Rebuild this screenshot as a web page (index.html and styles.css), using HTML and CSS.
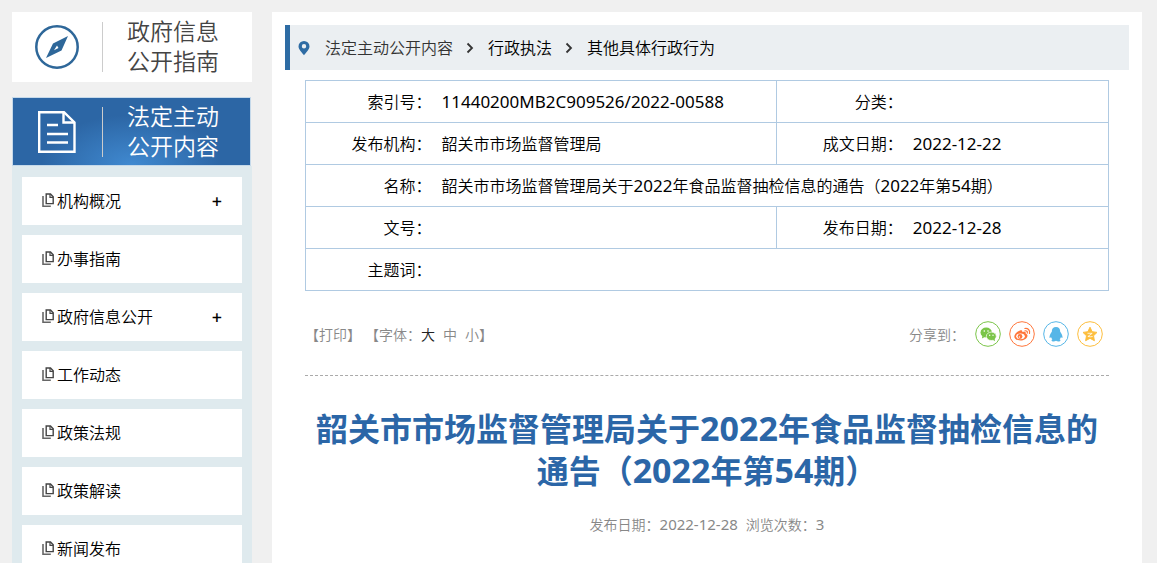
FILE: index.html
```html
<!DOCTYPE html>
<html lang="zh-CN">
<head>
    <meta charset="UTF-8">
    <meta name="viewport" content="width=device-width, initial-scale=1.0">
    <title>韶关市市场监督管理局</title>
    <link rel="stylesheet" href="styles.css">
</head>
<body>

<svg class="sprite" width="0" height="0" aria-hidden="true">
    <symbol id="copy" viewBox="0 0 12 14">
        <path d="M4.200 1h4.300L11.200 3.800V10.600H4.200z" fill="none" stroke="#444" stroke-width="1.4"/>
        <path d="M8 1v3.300h3.200" fill="none" stroke="#444" stroke-width="1.2"/>
        <path d="M1 3v10.300h7.800" fill="none" stroke="#666" stroke-width="1.6"/>
    </symbol>
    <symbol id="arrow" viewBox="0 0 8 12">
        <path d="M1.500 1.500L6 6l-4.500 4.500" fill="none" stroke="#333" stroke-width="1.8"/>
    </symbol>
</svg>

<div class="container">
    <aside class="sidebar">
        <a class="guide" href="#">
            <span class="guide-icon">
                <svg width="44" height="44" viewBox="0 0 44 44">
                    <circle cx="22" cy="22" r="20.700" fill="none" stroke="#2e6799" stroke-width="2.500"/>
                    <path fill="#2e6799" fill-rule="evenodd" d="M33 11L26.500 25.500 11 33 18 18.500zM22 20.500l-3 4.800 4.500-2.200z"/>
                </svg>
            </span>
            <span class="guide-text">政府信息<br>公开指南</span>
        </a>
        <a class="guide active" href="#">
            <span class="guide-icon">
                <svg width="40" height="44" viewBox="0 0 40 44">
                    <path d="M1.200 2.200H26L36.500 12.500V41.800H1.200z" fill="none" stroke="#fff" stroke-width="2.400"/>
                    <path d="M25.500 2.200V12.500h11M9 15h11M9 24h21M9 32.500h21" fill="none" stroke="#fff" stroke-width="2.400"/>
                </svg>
            </span>
            <span class="guide-text">法定主动<br>公开内容</span>
        </a>
        <ul class="menu">
            <li><a href="#"><svg class="copy"><use href="#copy"/></svg>机构概况</a><button type="button" aria-label="展开机构概况">+</button></li>
            <li><a href="#"><svg class="copy"><use href="#copy"/></svg>办事指南</a></li>
            <li><a href="#"><svg class="copy"><use href="#copy"/></svg>政府信息公开</a><button type="button" aria-label="展开政府信息公开">+</button></li>
            <li><a href="#"><svg class="copy"><use href="#copy"/></svg>工作动态</a></li>
            <li><a href="#"><svg class="copy"><use href="#copy"/></svg>政策法规</a></li>
            <li><a href="#"><svg class="copy"><use href="#copy"/></svg>政策解读</a></li>
            <li><a href="#"><svg class="copy"><use href="#copy"/></svg>新闻发布</a></li>
        </ul>
    </aside>

    <main class="main">
        <nav class="crumbs">
            <svg class="pin" viewBox="0 0 12 16">
                <path fill="#2e6ca4" fill-rule="evenodd" d="M6 1a5.500 5.500 0 0 0-5.500 5.500C.5 9.500 4 12.500 6 15.300 8 12.500 11.500 9.500 11.500 6.500A5.500 5.500 0 0 0 6 1zM6 4a2.200 2.200 0 1 1 0 4.400A2.200 2.200 0 0 1 6 4z"/>
            </svg>
            <a class="first" href="#">法定主动公开内容</a>
            <svg class="arrow"><use href="#arrow"/></svg>
            <a href="#">行政执法</a>
            <svg class="arrow"><use href="#arrow"/></svg>
            <a href="#">其他具体行政行为</a>
        </nav>

        <article class="content">
            <table class="info">
                <colgroup>
                    <col class="label">
                    <col>
                    <col class="label">
                    <col class="narrow">
                </colgroup>
                <tr>
                    <th>索引号：</th>
                    <td><span class="num">11440200MB2C909526/2022-00588</span></td>
                    <th>分类：</th>
                    <td></td>
                </tr>
                <tr>
                    <th>发布机构：</th>
                    <td>韶关市市场监督管理局</td>
                    <th>成文日期：</th>
                    <td><span class="num">2022-12-22</span></td>
                </tr>
                <tr>
                    <th>名称：</th>
                    <td colspan="3">韶关市市场监督管理局关于<span class="num">2022</span>年食品监督抽检信息的通告（<span class="num">2022</span>年第<span class="num">54</span>期）</td>
                </tr>
                <tr>
                    <th>文号：</th>
                    <td></td>
                    <th>发布日期：</th>
                    <td><span class="num">2022-12-28</span></td>
                </tr>
                <tr>
                    <th>主题词：</th>
                    <td colspan="3"></td>
                </tr>
            </table>

            <div class="tools">
                <div class="print">
                    <button type="button">【打印】</button>
                    <div class="sizes">【字体：<button type="button" class="on">大</button><button type="button">中</button><button type="button">小</button>】</div>
                </div>
                <div class="share">
                    <span class="share-label">分享到：</span>
                    <a href="#" aria-label="微信">
                        <svg viewBox="0 0 26 26">
                            <circle cx="13" cy="13" r="12.300" fill="#fff" stroke="#7bc549"/>
                            <ellipse cx="11.200" cy="11.500" rx="5.700" ry="4.900" fill="#7bc549"/>
                            <path d="M7.500 14.500l-.6 3 3-1.500z" fill="#7bc549"/>
                            <ellipse cx="16.300" cy="15.300" rx="5" ry="4.200" fill="#7bc549" stroke="#fff" stroke-width=".7"/>
                            <path d="M17.500 18.500l2.500 1.800-.4-2.600z" fill="#7bc549"/>
                            <g fill="#fff"><circle cx="9.300" cy="10" r=".8"/><circle cx="13" cy="10" r=".8"/><circle cx="14.700" cy="14.200" r=".7"/><circle cx="18" cy="14.200" r=".7"/></g>
                        </svg>
                    </a>
                    <a href="#" aria-label="微博">
                        <svg viewBox="0 0 26 26">
                            <circle cx="13" cy="13" r="12.300" fill="#fff" stroke="#ff763b"/>
                            <path fill="#ff763b" d="M11 9.500c1.700-.7 2.600.2 2.200 1.600 2-.8 4.200-.4 3.500 1.700 1.400.4 2 1.300 1.700 2.500-.6 2.500-3.500 4.200-6.900 4.200-3.600 0-6.200-1.700-6.200-4.100 0-2.200 3-5 5.700-5.900z"/>
                            <ellipse cx="11.500" cy="15.300" rx="4.300" ry="2.900" fill="#fff"/>
                            <circle cx="11" cy="15.500" r="2.400" fill="#ff763b"/>
                            <circle cx="10.400" cy="16" r=".7" fill="#fff"/>
                            <path d="M15.800 7.500c3-.6 5.500 1.700 4.700 5M16 9.800c1.600-.3 2.700.7 2.300 2.300" fill="none" stroke="#ff763b" stroke-width="1.200" stroke-linecap="round"/>
                        </svg>
                    </a>
                    <a href="#" aria-label="QQ">
                        <svg viewBox="0 0 26 26">
                            <circle cx="13" cy="13" r="12.300" fill="#fff" stroke="#56b6e7"/>
                            <path fill="#56b6e7" d="M13 6c-2.800 0-4.300 2-4.200 4.800-1.100 1.700-2.500 3.700-2.300 5.800.1.900.9.300 1.500-.7.200 1 .7 1.800 1.400 2.400-1.100.4-1.300 1.700.3 2.100 1.300.2 2.600-.1 3.300-.7.700.6 2 .9 3.300.7 1.600-.4 1.400-1.700.3-2.100.7-.6 1.200-1.400 1.400-2.400.6 1 1.400 1.600 1.500.7.200-2.100-1.200-4.100-2.300-5.800C17.300 8 15.800 6 13 6z"/>
                        </svg>
                    </a>
                    <a href="#" aria-label="QQ空间">
                        <svg viewBox="0 0 26 26">
                            <circle cx="13" cy="13" r="12.300" fill="#fff" stroke="#fdbe3d"/>
                            <path fill="#fdbe3d" stroke="#fdbe3d" stroke-linejoin="round" d="M13 6.200l2.100 4.500 4.900.7-3.500 3.400.9 4.900-4.400-2.400-4.400 2.400.9-4.900L6 11.400l4.900-.7z"/>
                            <path d="M10.500 12.300h4.700l-4.300 3.200c1.700.4 3.200.4 4.700 0" fill="none" stroke="#fff" stroke-width=".8"/>
                        </svg>
                    </a>
                </div>
            </div>

            <h1>韶关市市场监督管理局关于<span class="num">2022</span>年食品监督抽检信息的通告（<span class="num">2022</span>年第<span class="num">54</span>期）</h1>
            <p class="meta"><span>发布日期：<span class="num">2022-12-28</span></span><span>浏览次数：<span class="num">3</span></span></p>
        </article>
    </main>
</div>

</body>
</html>
```
FILE: styles.css
```css
* {
    box-sizing: border-box;
}
body {
    margin: 0;
    background-color: #f0f0f0;
    color: #000;
    font-family: "Noto Sans CJK SC", sans-serif;
    font-size: 16px;
    font-weight: 350;
}
a {
    color: inherit;
    text-decoration: none;
}
button {
    padding: 0;
    border: none;
    background: none;
    color: inherit;
    font: inherit;
    cursor: pointer;
}
svg {
    display: block;
    flex: none;
}
.sprite {
    position: absolute;
}
.container {
    display: flex;
    gap: 20px;
    padding: 12px 15px 0 12px;
}

/* latin digits run a step larger than the chinese text */
.num {
    font-family: "Noto Sans", sans-serif;
    font-size: 17px;
    font-weight: 400;
    line-height: 1;
}

/* sidebar */
.sidebar {
    flex: none;
    width: 240px;
}
.guide {
    display: flex;
    align-items: center;
    height: 70px;
    margin-bottom: 15px;
    background-color: #fff;
    color: #444;
}
.guide-icon {
    display: flex;
    justify-content: center;
    align-items: center;
    width: 91px;
    height: 50px;
    border-right: 1px solid #ccc;
}
.guide-text {
    padding: 0 0 4px 24px;
    font-size: 23px;
    line-height: 30px;
}
.guide.active {
    width: 239px;
    height: 69px;
    margin-bottom: 0;
    border: 1px solid #c5d9ea;
    background: radial-gradient(ellipse 90px 50px at 50% 100%, #4089d0, #2c66a5);
    color: #fff;
}
.active .guide-icon {
    width: 90px;
}
.menu {
    display: flex;
    flex-direction: column;
    gap: 10px;
    margin: 0;
    padding: 11px 10px;
    background-color: #dfeaee;
    list-style: none;
}
.menu li {
    display: flex;
    justify-content: space-between;
    align-items: center;
    height: 48px;
    padding: 0 20px 2px;
    background-color: #fff;
}
.menu a {
    display: flex;
    align-items: center;
    gap: 3px;
}
.menu button {
    padding-top: 2px;
    font-family: "Noto Sans", sans-serif;
    font-size: 18px;
    font-weight: 500;
}
.copy {
    width: 12px;
    height: 14px;
}

/* main column */
.main {
    flex: 1;
    min-width: 0;
    padding: 13px;
    background-color: #fff;
}
.crumbs {
    display: flex;
    align-items: center;
    height: 45px;
    padding-left: 8px;
    border-left: 5px solid #2e6ca4;
    background-color: #ebeff2;
}
.crumbs a {
    padding-bottom: 2px;
}
.crumbs .first {
    color: #333;
}
.pin {
    width: 12px;
    height: 16px;
    margin-right: 15px;
}
.arrow {
    width: 8px;
    height: 12px;
    margin: 0 14px 0 13px;
}
.content {
    padding: 10px 20px;
}
.info {
    width: 100%;
    border-collapse: collapse;
    table-layout: fixed;
}
.info .label {
    width: 131px;
}
.info .narrow {
    width: 25%;
}
.info tr {
    height: 42px;
    border: 1px solid #b0cae2;
}
.info th,
.info td {
    padding: 0 5px 2px;
    line-height: 24px;
    font-weight: inherit;
}
.info th {
    text-align: right;
}
.info td {
    border-right: 1px solid #b0cae2;
}
.tools {
    display: flex;
    justify-content: space-between;
    align-items: center;
    padding: 30px 6px 28px 0;
    border-bottom: 1px dashed #aaa;
    color: #888;
    font-size: 14px;
}
.print {
    display: flex;
    gap: 4px;
}
.sizes button {
    margin-right: 8px;
}
.sizes button:last-child {
    margin-right: 0;
}
.sizes .on {
    color: #222;
}
.share {
    display: flex;
    align-items: center;
    gap: 8px;
}
.share-label {
    margin-right: 2px;
}
.share svg {
    width: 26px;
    height: 26px;
}
h1 {
    margin: 30px 0 24px;
    color: #2b66a7;
    font-size: 32px;
    line-height: 42px;
    text-align: center;
}
h1 .num {
    font-size: 34px;
    font-weight: bold;
}
.meta {
    display: flex;
    justify-content: center;
    gap: 8px;
    margin: 0;
    color: #888;
    font-size: 14px;
    line-height: 20px;
}
.meta .num {
    font-size: 15px;
}
```
